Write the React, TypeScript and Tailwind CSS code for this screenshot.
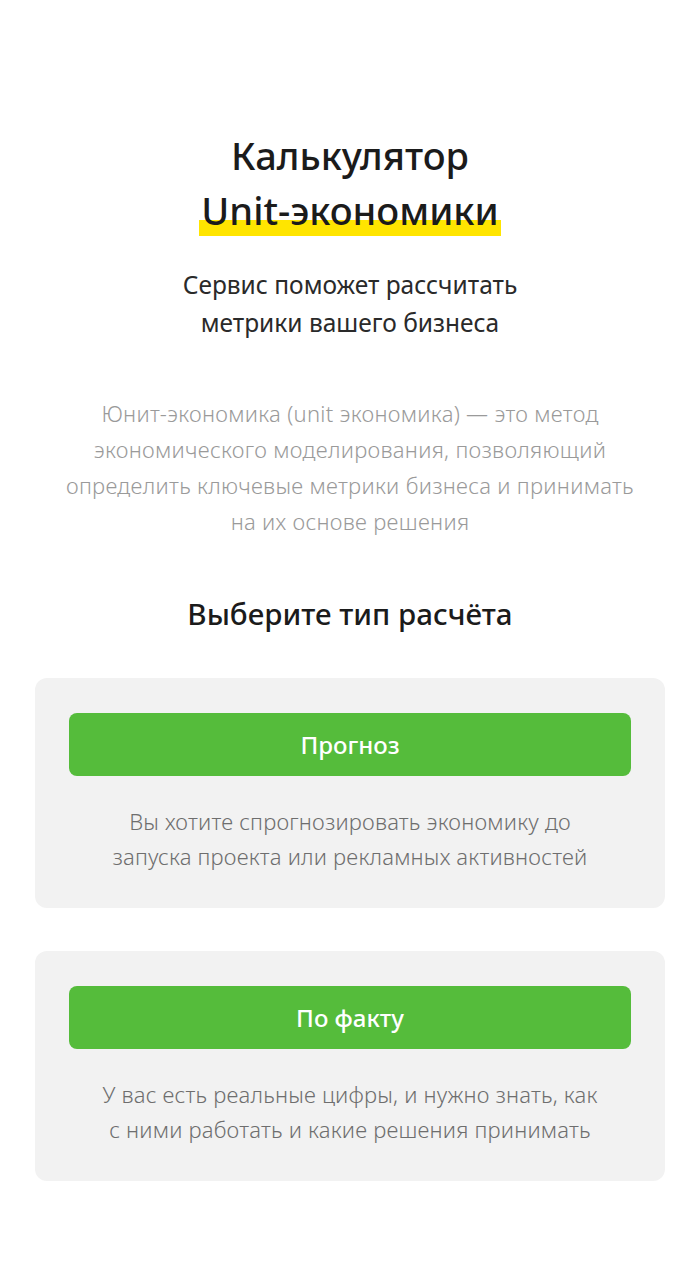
const font = "font-['Noto_Sans','DejaVu_Sans',sans-serif]";

type Option = {
  label: string;
  lines: [string, string];
};

const options: Option[] = [
  {
    label: "Прогноз",
    lines: ["Вы хотите спрогнозировать экономику до", "запуска проекта или рекламных активностей"],
  },
  {
    label: "По факту",
    lines: ["У вас есть реальные цифры, и нужно знать, как", "с ними работать и какие решения принимать"],
  },
];

function OptionCard({ option }: { option: Option }) {
  return (
    <div className="rounded-[12px] bg-[#f2f2f2] px-[34px] pt-[35px] pb-[34px]">
      <button
        type="button"
        className="flex h-[63px] w-full items-center justify-center rounded-[8px] bg-[#55bc3b] text-[24px] font-medium text-white"
      >
        {option.label}
      </button>
      <p className="mt-[28px] text-center text-[22px] leading-[35px] font-light tracking-[0.2px] text-[#6e6e6e]">
        {option.lines[0]}
        <br />
        {option.lines[1]}
      </p>
    </div>
  );
}

export default function App() {
  return (
    <div className={`${font} min-h-[1280px] w-full bg-white`}>
      <div className="flex flex-col items-center pt-[128px] text-center">
        <h1 className="text-[38px] leading-[55px] font-medium text-[#1b1b1b]">
          Калькулятор
          <br />
          <span className="inline-block px-[2px] bg-[linear-gradient(to_bottom,transparent_67%,#ffe500_67%,#ffe500_97%,transparent_97%)]">
            Unit-экономики
          </span>
        </h1>
        <p className="mt-[28px] text-[24.5px] leading-[38px] text-[#2a2a2a]">
          Сервис поможет рассчитать
          <br />
          метрики вашего бизнеса
        </p>
        <p className="mt-[53px] text-[22px] leading-[36px] font-light tracking-[0.3px] text-[#9a9a9a]">
          Юнит-экономика (unit экономика) — это метод
          <br />
          экономического моделирования, позволяющий
          <br />
          определить ключевые метрики бизнеса и принимать
          <br />
          на их основе решения
        </p>
        <h2 className="mt-[55px] text-[29.5px] leading-[40px] font-medium text-[#1b1b1b]">
          Выберите тип расчёта
        </h2>
      </div>
      <div className="mt-[44px] flex flex-col gap-[43px] px-[35px] pb-[100px]">
        {options.map((o) => (
          <OptionCard key={o.label} option={o} />
        ))}
      </div>
    </div>
  );
}
